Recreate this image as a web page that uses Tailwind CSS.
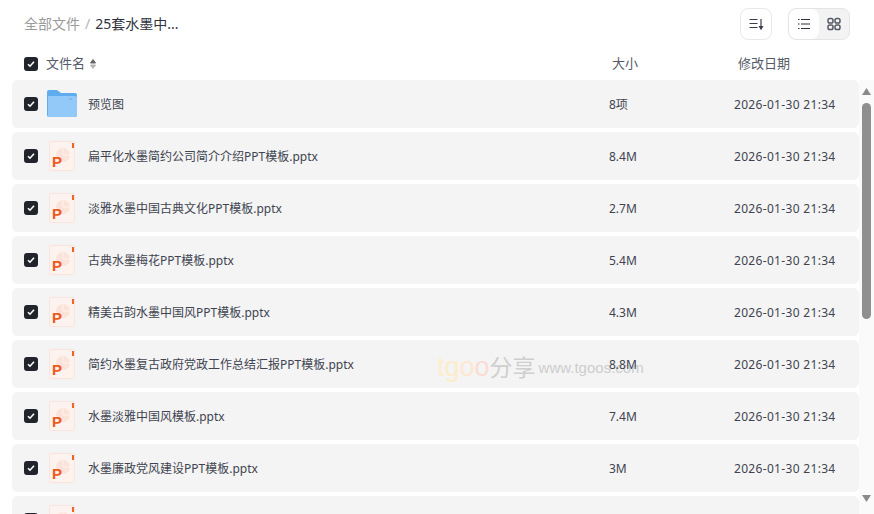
<!DOCTYPE html>
<html>
<head>
<meta charset="utf-8">
<script src="https://cdn.jsdelivr.net/npm/@tailwindcss/browser@4"></script>
</head>
<body class="bg-white">
<div class="relative w-[874px] h-[514px] overflow-hidden font-['Noto_Sans','Noto_Sans_CJK_SC',sans-serif] text-[#3a3f4b]">
  <!-- top bar -->
  <header class="h-[48px] flex items-center justify-between pl-6 pr-6">
    <div class="flex items-center text-sm leading-[48px]">
      <span class="text-[#9a9a9a]">全部文件</span>
      <span class="mx-[5px] text-[#b0b4bc]">/</span>
      <span class="text-[#2f3340]">25套水墨中...</span>
    </div>
    <div class="flex items-center gap-4">
      <button class="w-8 h-8 rounded-lg border border-[#e8e8e8] flex items-center justify-center">
        <svg width="16" height="16" viewBox="0 0 16 16" fill="none" stroke="#3a3f4b" stroke-width="1.200"><path d="M1.500 3.500h8M1.500 7.500h8M1.500 11.500h8"/><path d="M13 3v9.500"/><path d="M11.500 10.500l1.500 2.500 1.500-2.500z" fill="#3a3f4b"/></svg>
      </button>
      <div class="w-[62px] h-8 rounded-lg border border-[#e4e4e4] bg-[#f3f3f3] flex overflow-hidden">
        <div class="w-[30px] bg-white rounded-lg flex items-center justify-center">
          <svg width="14" height="14" viewBox="0 0 14 14" fill="none" stroke="#2f3340" stroke-width="1.100"><path d="M4 2.500h9M4 7h9M4 11.500h9"/><path d="M1 2.500h1.500M1 7h1.500M1 11.500h1.500"/></svg>
        </div>
        <div class="flex-1 flex items-center justify-center">
          <svg width="14" height="14" viewBox="0 0 14 14" fill="none" stroke="#555a66" stroke-width="1.500"><rect x="1" y="1.500" width="5" height="4.500" rx="1.800"/><rect x="8" y="1.500" width="5" height="4.500" rx="1.800"/><rect x="1" y="8" width="5" height="4.500" rx="1.800"/><rect x="8" y="8" width="5" height="4.500" rx="1.800"/></svg>
        </div>
      </div>
    </div>
  </header>

  <!-- column heads -->
  <div class="h-[32px] flex items-center pl-6 text-[13px] text-[#555a66]">
    <span class="w-[14px] h-[14px] rounded-[3px] bg-[#22242c] flex items-center justify-center">
      <svg width="8" height="8" viewBox="0 0 8 8" fill="none" stroke="#fff" stroke-width="1.600"><path d="M1 4.200l2 2 4-4.400"/></svg>
    </span>
    <span class="ml-2">文件名</span>
    <svg class="ml-[4px]" width="8" height="12" viewBox="0 0 8 12"><path d="M4 1.500l2.500 3.500h-5z" fill="#666" stroke="#666" stroke-linejoin="round"/><path d="M4 10.500l2.500-3.500h-5z" fill="#b5b5b5" stroke="#b5b5b5" stroke-linejoin="round"/></svg>
    <span class="absolute left-[612px]">大小</span>
    <span class="absolute left-[738px]">修改日期</span>
  </div>

  <!-- list + scrollbar -->
  <div class="flex h-[434px]">
    <ul id="list" class="w-[859px] pl-3 flex flex-col gap-1 overflow-hidden text-xs"></ul>

    <div class="w-[15px] bg-[#fafafa] flex flex-col items-center">
      <svg class="mt-[8px]" width="9" height="7" viewBox="0 0 9 7"><path d="M4.500 0L9 7H0z" fill="#8a8a8a"/></svg>
      <div class="mt-[8px] w-[9px] h-[216px] rounded-full bg-[#8f8f8f]"></div>
      <svg class="mt-[176px]" width="9" height="7" viewBox="0 0 9 7"><path d="M4.500 7L9 0H0z" fill="#8a8a8a"/></svg>
    </div>
  </div>

  <!-- watermark -->
  <div class="absolute left-[437px] top-[349px] flex items-center whitespace-nowrap pointer-events-none">
    <span class="text-[27px] leading-[36px] font-['Liberation_Sans'] text-[#fdeecb]">t<span class="text-[#fdeccb]">g</span><span class="text-[#fde7d0]">o</span><span class="text-[#fbdcd4]">o</span></span>
    <span class="text-[23px] leading-[36px] text-[#cfcfcf]">分享</span>
    <span class="ml-[3px] mt-[3px] text-[15px] font-['Liberation_Sans'] text-[#cdcdcd]">www.tgoos.com</span>
  </div>
</div>

<script>
    const files = [
        ['预览图', '8项'],
        ['扁平化水墨简约公司简介介绍PPT模板.pptx', '8.4M'],
        ['淡雅水墨中国古典文化PPT模板.pptx', '2.7M'],
        ['古典水墨梅花PPT模板.pptx', '5.4M'],
        ['精美古韵水墨中国风PPT模板.pptx', '4.3M'],
        ['简约水墨复古政府党政工作总结汇报PPT模板.pptx', '8.8M'],
        ['水墨淡雅中国风模板.pptx', '7.4M'],
        ['水墨廉政党风建设PPT模板.pptx', '3M'],
        ['', '']
    ]

    const check = `<span class="ml-3 w-[14px] h-[14px] shrink-0 rounded-[3px] bg-[#22242c] flex items-center justify-center"><svg width="8" height="8" viewBox="0 0 8 8" fill="none" stroke="#fff" stroke-width="1.600"><path d="M1 4.200l2 2 4-4.400"/></svg></span>`

    const folder = `<svg class="ml-[9px] shrink-0 mb-px" width="30" height="27" viewBox="0 0 30 27"><path d="M0 2a2 2 0 0 1 2-2h8l4 3h14a2 2 0 0 1 2 2v20a2 2 0 0 1-2 2H2a2 2 0 0 1-2-2z" fill="#5fadef"/><path d="M1 6h27a2 2 0 0 1 2 2v17a2 2 0 0 1-2 2H2a1 1 0 0 1-1-1z" fill="#93c9f8"/><rect x="22" y="8" width="3" height="2" fill="#7dbaf0"/></svg>`

    // the sheet without its letter, for the row the window cuts off
    const sheet = `<rect x="0.500" y="0.500" width="25" height="29" rx="1.500" fill="#fdf3ee" stroke="#fbe4db"/><rect x="23" y="2" width="2" height="5" fill="#f0622c"/><circle cx="14" cy="14" r="7" fill="#fbe3d9"/><path d="M14 7v7h7" stroke="#fdf3ee" fill="none"/>`
    const ppt = `<svg class="ml-[11px] shrink-0" width="26" height="30" viewBox="0 0 26 30">${sheet}<text x="3" y="26" font-size="15" font-weight="700" fill="#ee5a22" font-family="Liberation Sans">P</text></svg>`
    const pptCut = `<svg class="ml-[11px] shrink-0" width="26" height="30" viewBox="0 0 26 30">${sheet}</svg>`

    const list = document.getElementById('list')
    files.forEach(([name, size], i) => {
        const li = document.createElement('li')
        li.className = 'h-12 shrink-0 rounded-md bg-[#f4f4f4] flex items-center text-[#3f4450]'
        if (name) {
            li.innerHTML = `${check}${i === 0 ? folder : ppt}
                <span class="${i === 0 ? 'ml-[11px]' : 'ml-[13px]'} w-[521px] pt-0.5">${name}</span>
                <span class="relative z-10 w-[125px] pt-0.5">${size}</span>
                <span class="pt-0.5 tracking-[0.32px]">2026-01-30 21:34</span>`
        } else {
            li.innerHTML = check + pptCut
        }
        list.appendChild(li)
    })
</script>
</body>
</html>
